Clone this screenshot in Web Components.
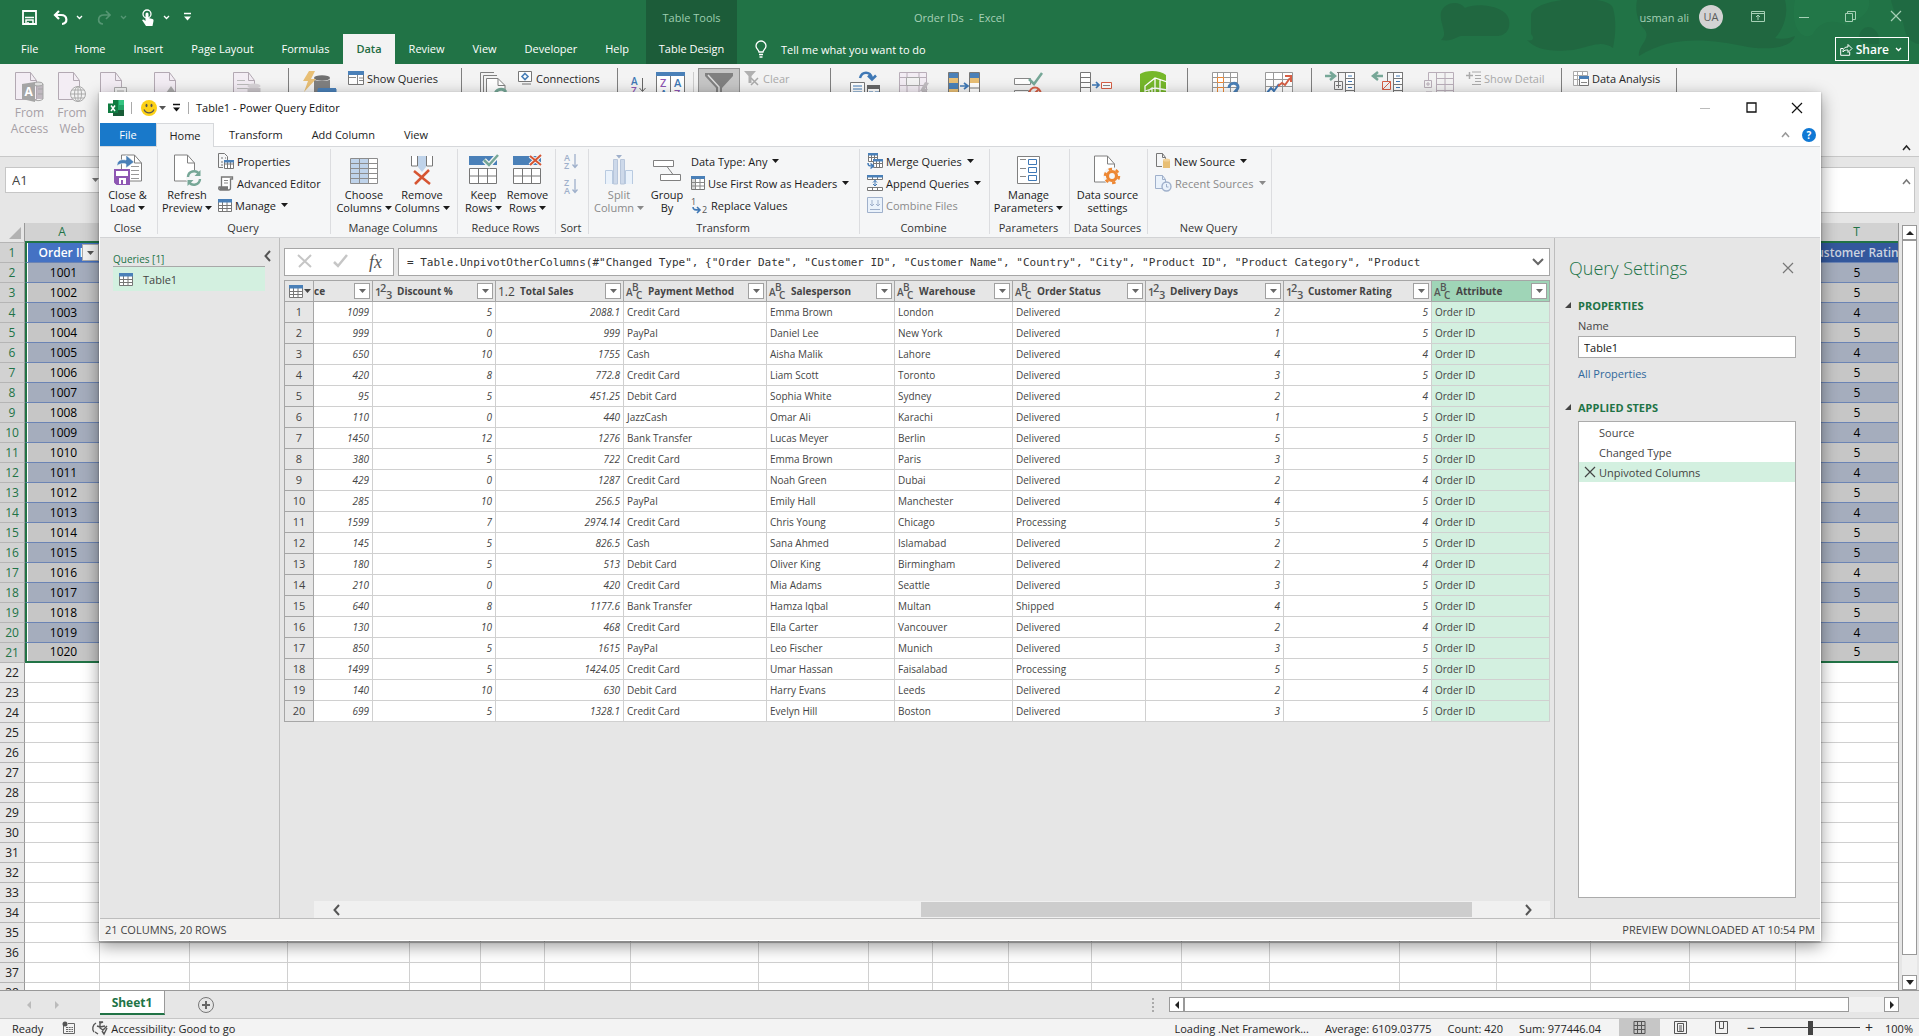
<!DOCTYPE html>
<html lang="en">
<head>
<meta charset="utf-8">
<title>Order IDs - Excel</title>
<style>
html, body {
  height: 100%;
  margin: 0;
}

body {
  position: relative;
  display: flex;
  flex-direction: column;
  overflow: hidden;
  background: #e6e6e6;
  color: #262626;
  font-family: "Open Sans", "Noto Sans", sans-serif;
  font-size: 11px;
}

xl-sheet {
  flex: 1;
  min-height: 0;
}

pq-window {
  position: absolute;
  inset: 92px 98px 95px 99px;
}
</style>
</head>
<body>
<xl-header></xl-header>
<xl-ribbon></xl-ribbon>
<xl-formula-bar></xl-formula-bar>
<xl-sheet></xl-sheet>
<xl-sheet-tabs></xl-sheet-tabs>
<xl-status-bar></xl-status-bar>
<pq-window></pq-window>

<script>
const page = (x, w, h) => `<path d="M${x} 1h${w - 8}l7 8v${h - 10}h-${w - 1}z" fill="#fff" stroke="#808080"/><path d="M${x + w - 8} 1v8h7" fill="none" stroke="#808080"/>`;
const greyPage = '<path d="M.5.5h15l6 8v19h-21z" fill="#f3edf4" stroke="#b3a9b3"/><path d="M15.500.5v8h6" fill="none" stroke="#b3a9b3"/>';

// name: [width, height, markup]
const icons = {
  caret: [7, 4, '<path d="M0 0h7L3.500 4z" fill="currentColor"/>'],
  chevron: [7, 5, '<path d="M1 1l2.500 2.500L6 1" fill="none" stroke="currentColor" stroke-width="1.300"/>'],
  up: [9, 6, '<path d="M1 5l3.500-4L8 5" fill="none" stroke="currentColor" stroke-width="1.500"/>'],
  customize: [7, 8, '<path d="M0 .5h7" stroke="currentColor" stroke-width="1.500"/><path d="M0 3.500h7L3.500 7.500z" fill="currentColor"/>'],
  save: [15, 15, '<path d="M1 1h13v13H1z" fill="none" stroke="#fff" stroke-width="1.800"/><path d="M3 7.500h9M4 14v-4h7v4M6 14v-2" stroke="#fff" stroke-width="1.500" fill="none"/>'],
  undo: [15, 15, '<path d="M6 1L2 5l4 4M2 5h6c7 0 7 9 1 9" fill="none" stroke="currentColor" stroke-width="2.200"/>'],
  redo: [15, 15, '<path d="M9 1l4 4-4 4M13 5H7C0 5 0 14 6 14" fill="none" stroke="currentColor" stroke-width="1.700"/>'],
  touch: [14, 17, '<circle cx="6" cy="5" r="4" fill="none" stroke="#fff" stroke-width="1.300"/><path d="M4.500 5a1.500 1.500 0 0 1 3 0v4l4 1q1.500.5 1 2l-1 5H5l-4-6 1.500-.5 2 1.500z" fill="#fff"/>'],
  bulb: [12, 17, '<path d="M4 11C4 9 1 8 1 5a5 5 0 0 1 10 0c0 3-3 4-3 6zM4 13.500h4M4.500 16h3" fill="none" stroke="#fff" stroke-width="1.300"/>'],
  ribbonOptions: [14, 11, '<path d="M.5.5h13v10H.5zM.5 2.500h13M7 9V4.500M5 6l2-2 2 2" fill="none" stroke="currentColor"/>'],
  minimize: [10, 10, '<path d="M0 5.500h10" stroke="currentColor"/>'],
  restore: [11, 11, '<path d="M.5 2.500h7v8h-7zM2.500 2V.5h8v8H8" fill="none" stroke="currentColor"/>'],
  maximize: [11, 11, '<path d="M1 1h9v9H1z" fill="none" stroke="currentColor" stroke-width="1.300"/>'],
  close: [12, 12, '<path d="M1 1l10 10M11 1L1 11" stroke="currentColor" stroke-width="1.200"/>'],
  share: [13, 13, '<path d="M3 5.500H.7v6.800h9V9M3 9c0-4 2-5 5-5V1.500l4 4-4 4V7c-2 0-4 0-5 2z" fill="none" stroke="#fff"/>'],
  access: [29, 31, greyPage + '<path d="M22 12h6v15h-6z" fill="#c0b8c0"/><ellipse cx="23" cy="12" rx="5" ry="2" fill="#ddd" stroke="#a5a5a5"/><path d="M28 12v15c-2 2-6 2-8 1M28 17h-5M28 22h-5" fill="none" stroke="#a5a5a5"/><path d="M7 12l13-2v20L7 27z" fill="#a5a5a5"/><text x="9.500" y="24" font-size="12" font-weight="700" fill="#fff">A</text>'],
  web: [28, 31, greyPage + '<circle cx="20" cy="22" r="7.500" fill="#f3f3f3" stroke="#aaa"/><path d="M12.500 22h15M20 14.500v15M14 18h12M14 26h12" stroke="#aaa"/><ellipse cx="20" cy="22" rx="3.500" ry="7.500" fill="none" stroke="#aaa"/>'],
  textFile: [28, 31, greyPage + '<path d="M14.500 15.500h12v14h-12z" fill="#f3f3f3" stroke="#aaa"/><path d="M17 19h7M17 22h7" stroke="#aaa"/>'],
  otherSource: [28, 31, greyPage + '<path d="M16 13l5 7H11z" transform="translate(1 1)" fill="#aaa"/>'],
  recent: [28, 31, greyPage + '<path d="M4 8.500h8M4 12.500h14M4 16.500h14M4 20.500h10" stroke="#bbb"/><ellipse cx="21" cy="14" rx="6.500" ry="2.500" fill="#d8d4d8"/><path d="M14.500 16h13v12h-13z" fill="#c9c4c9"/>'],
  getData: [34, 31, '<ellipse cx="19" cy="6" rx="8" ry="2.700" fill="#707070"/><path d="M11 7.500c3 2 13 2 16 0V24H11z" fill="#808080"/><path d="M6-1h6L8 7h5L1 20 5 9H0z" fill="#e8bf75"/><path d="M15 17h18v13H15z" fill="#fff" stroke="#4a80b8"/><path d="M15 16h18v4H15z" fill="#4a80b8"/>'],
  queries: [16, 14, '<path d="M.5.5h15v13H.5z" fill="#fff" stroke="#777"/><path d="M0 0h16v4H0z" fill="#4a80b8"/><path d="M9.500 4v9M1 6.500h7M11 7h4M11 9.500h4" stroke="#888"/>'],
  refreshAll: [28, 31, '<path d="M.5 25V.5H14M3.500 27V3.500H17" fill="none" stroke="#808080"/><path d="M6.500 6.500H18l7 7V30H6.500z" fill="#fff" stroke="#808080"/><path d="M18 6.500v7h7" fill="none" stroke="#808080"/><path d="M15 23a6 6 0 0 1 11-3" fill="none" stroke="#76a797" stroke-width="3"/>'],
  connections: [15, 14, '<path d="M.5.5h13v10H.5zM4 13h9" fill="#fff" stroke="#777"/><path d="M7 2.500L10 5.500l-3 3-3-3z" fill="none" stroke="#4a80b8" stroke-width="1.600"/>'],
  sortAZ: [14, 28, '<text x="0" y="13" font-size="10" font-weight="600" fill="#3f78b5">A</text><text x="0" y="23" font-size="10" font-weight="600" fill="#8e57b3">Z</text><path d="M11.500 6v13M8.500 16l3 3.500 3-3.500" fill="none" stroke="#666"/>'],
  sort: [29, 29, '<path d="M.5.5h28v28H.5z" fill="#fff" stroke="#777"/><path d="M0 0h29v4H0z" fill="#4a80b8"/><path d="M14.500 4v24" stroke="#777"/><g font-size="11" font-weight="600"><text x="4" y="15" fill="#8e57b3">Z</text><text x="18" y="15" fill="#3f78b5">A</text><text x="4" y="26" fill="#3f78b5">A</text><text x="18" y="26" fill="#8e57b3">Z</text></g>'],
  filter: [28, 29, '<path d="M0 0h28v3L17 15v13h-6V15L0 3z" fill="#808080"/><path d="M3 2l11 12v12" fill="none" stroke="#ddd" stroke-width="1.500"/>'],
  clear: [16, 15, '<path d="M0 0h12L7.500 5v7h-3V5z" fill="#b0b0b0"/><path d="M7 7l7 7M14 7l-7 7" stroke="#aaa" stroke-width="1.500"/>'],
  textToColumns: [30, 31, '<path d="M10 6C12-1 20-1 22 6M18 3.500l4 4 4-4" fill="none" stroke="#3f78b5" stroke-width="2.500"/><path d="M.5 10.500h14v20H.5z" fill="#fff" stroke="#777"/><path d="M3 14h9M3 17h9M3 20h9" stroke="#3f78b5"/><path d="M17.500 13.500h12v16h-12z" fill="#fff" stroke="#666"/><path d="M17 13h13v4H17z" fill="#666"/><path d="M19 20h4M25 20h4" stroke="#3f78b5"/>'],
  flashFill: [30, 31, '<path d="M.5.5h27v26H.5zM.5 5.500h27M.5 13.500h27M8 .5v26M20 .5v26" fill="#f3edf4" stroke="#b9aeb9"/><path d="M7.500 5.500h13v8h-13z" fill="#f3f3f3" stroke="#aaa"/><path d="M26 10l4 1-4 6h3l-9 12 3-10h-2z" fill="#c0bcc0"/>'],
  duplicates: [32, 31, '<path d="M.5.5h10v30H.5z" fill="#4a80b8" stroke="#777"/><path d="M1 6h9v5H1zM1 17h9v5H1z" fill="#e8bf75"/><path d="M21.500.5h10v30h-10z" fill="#fff" stroke="#777"/><path d="M22 1h9v5h-9z" fill="#4a80b8"/><path d="M22 6h9v5h-9z" fill="#e8bf75"/><path d="M21.500 16h10" stroke="#777"/><path d="M12 14h8M16 11l4 3-4 3" fill="none" stroke="#3f78b5" stroke-width="1.700"/>'],
  validation: [28, 31, '<path d="M.5 6.500h16v6H.5zM.5 18.500h14v6H.5z" fill="#fff" stroke="#888"/><path d="M15 7l5 5 8-11" fill="none" stroke="#76a797" stroke-width="2.500"/><circle cx="21" cy="21" r="5.500" fill="none" stroke="#d65f45" stroke-width="2"/><path d="M17 25l8-8" stroke="#d65f45" stroke-width="2"/>'],
  consolidate: [32, 31, '<path d="M.5.5h10v30H.5zM.5 5.500h10M.5 10.500h10M.5 15.500h10M.5 20.500h10" fill="#fff" stroke="#777"/><path d="M12 13h7M16 10l3 3-3 3" fill="none" stroke="#3f78b5" stroke-width="1.700"/><path d="M21.500 10.500h10v6h-10z" fill="#fff" stroke="#d65f45"/><path d="M23 13.500h7" stroke="#888"/>'],
  relations: [28, 31, '<path d="M0 2C6-2 20-2 26 3v24H0z" fill="#76b82a"/><path d="M5 30V14l10-8 12 4v20M15 6v24M5 19l10-3 12 2M20 8v22M9 26v-8l3-2v14" fill="none" stroke="#fff" stroke-width="1.300"/>'],
  whatIf: [28, 31, '<path d="M.5.5h25v26H.5zM.5 5.500h25M.5 10.500h25M.5 15.500h25M5.500.5v26M11.500.5v26M18.500.5v26" fill="#fff" stroke="#999"/><path d="M5.500 5.500h6v5h-6zM5.500 15.500h6v5h-6z" fill="#fff" stroke="#ed8733"/><path d="M17 16c0-6 9-6 9-1 0 4-4 3-4 8" fill="none" stroke="#4a80b8" stroke-width="3"/>'],
  forecast: [28, 31, '<path d="M.5.5h27v27H.5zM.5 7.500h27M.5 14.500h27M8.500.5v27M17.500.5v27" fill="#fff" stroke="#999"/><path d="M1 22l5-6 3 3 5-7" fill="none" stroke="#3f78b5" stroke-width="2"/><path d="M13 14l4-3 3 2 5-7M20 4h6v6" fill="none" stroke="#d65f45" stroke-width="2"/>'],
  group: [30, 31, '<path d="M0 4h8M5 0l5 4-5 4" fill="none" stroke="#76a797" stroke-width="2.500"/><path d="M12 .5h18M13.500 1v10M9.500 9.500h8v8h-8zM11 13.500h5M13.500 11v5" fill="none" stroke="#777"/><path d="M20.500 1v29h9V1M20 6.500h9M20 12.500h9M20 18.500h9M20 24.500h9" fill="#fff" stroke="#777"/><path d="M23 4h4M23 9.500h4M23 15.500h4M23 21.500h4" stroke="#3f78b5"/>'],
  ungroup: [30, 31, '<path d="M2 4h8M5 0L0 4l5 4" fill="none" stroke="#76a797" stroke-width="2.500"/><path d="M14 .5h16M14.500 1v8" fill="none" stroke="#777"/><path d="M9.500 9.500h8v8h-8zM17.500 9.500l-8 8" fill="none" stroke="#d65f45"/><path d="M20.500 1v29h9V1M20 6.500h9M20 12.500h9M20 18.500h9M20 24.500h9" fill="#fff" stroke="#777"/><path d="M23 4h4M23 9.500h4M23 15.500h4M23 21.500h4" stroke="#3f78b5"/>'],
  subtotal: [30, 31, '<path d="M4.500 8V.5H29.500v30h-17V.5M12.500 6.500h17M12.500 12.500h17M12.500 18.500h17M21 .5v30M.5 8.500h7v7h-7zM2 12h4M4 10v4M2 30V20h6v10" fill="none" stroke="#b9aeb9"/>'],
  detail: [15, 15, '<path d="M0 4.500h7M3.500 1v7" stroke="#aaa" stroke-width="1.500"/><path d="M6 1h9M9 4.500h6M9 7.500h6M9 10.500h6M6 13.500h9" stroke="#aaa"/>'],
  analysis: [16, 15, '<path d="M.5.5h14v14H.5zM.5 4.500h14M.5 8.500h14M4.500.5v14M9.500.5v14" fill="#fff" stroke="#aaa"/><path d="M6.500 5.500h9v9h-9z" fill="#fff" stroke="#777"/><path d="M6 5h10v3H6z" fill="#4a80b8"/><path d="M8 11.500h6" stroke="#888"/>'],

  excel: [16, 16, '<path d="M5 0h11v16H5z" fill="#21a366"/><path d="M5 0h5v5H5z" fill="#107c41"/><path d="M11 0h5v5h-5z" fill="#33c481"/><path d="M5 5h5v5H5zM11 10h5v6H5v-6z" fill="#185c37"/><path d="M0 3.500h10v9.500H0z" fill="#107c41"/><path d="M3 5.500l4 5.500M7 5.500L3 11" stroke="#fff" stroke-width="1.500"/>'],
  smile: [16, 16, '<circle cx="8" cy="8" r="8" fill="#fcd116"/><ellipse cx="5.500" cy="5.500" rx="1" ry="1.800" fill="#555"/><ellipse cx="10.500" cy="5.500" rx="1" ry="1.800" fill="#555"/><path d="M3 9.500c2 4.500 8 4.500 10 0" fill="none" stroke="#555" stroke-width="1.200"/>'],
  help: [14, 14, '<circle cx="7" cy="7" r="7" fill="#0f78d4"/><text x="4.500" y="11" font-size="10" font-weight="700" fill="#fff">?</text>'],
  closeLoad: [28, 31, page(7.5, 21, 28) + '<path d="M17 12.500h8M17 16.500h8M17 20.500h8M17 24.500h8" stroke="#999"/><path d="M3 12C3 6 7 5 12 6V1l8 7-8 6v-4c-4-1-7 0-9 2z" fill="#4a80b8" stroke="#f5f6f7" stroke-width=".600"/><path d="M1 16h14v14H3l-2-2z" fill="#fff" stroke="#8e57b3" stroke-width="2"/><path d="M1 22h14v8H1z" fill="#8e57b3"/><path d="M5 24h7v6H5z" fill="#fff"/><path d="M7 26h2v4H7z" fill="#8e57b3"/>'],
  refresh: [28, 31, page(1.5, 21, 28) + '<circle cx="21" cy="24" r="8" fill="#f5f6f7"/><path d="M15 23a6 6 0 0 1 11-3M27 25a6 6 0 0 1-11 3" fill="none" stroke="#76a797" stroke-width="2.400"/><path d="M27.500 16v6h-6zM14.500 32v-6h6z" fill="#76a797"/>'],
  properties: [16, 16, '<path d="M.5.5h6l3 3v4M.5.5v14H5" fill="none" stroke="#777"/><path d="M3 5h2M3 9h2M3 12h2M7 5h1" stroke="#777"/><path d="M6.500 7.500h9v8h-9zM6.500 11h9M9.500 8v8M12.500 8v8" fill="#fff" stroke="#777"/><path d="M6 7h10v2.500H6z" fill="#4a80b8"/>'],
  editor: [16, 15, '<path d="M3.500 11V1h11v2h-2v9q0 2-2 2H2q-2-1-1-3h9" fill="#fff" stroke="#777" stroke-width="1.300"/><path d="M6 4.500h4M6 7h4" stroke="#888"/><path d="M1 11h9v3H2z" fill="#777"/>'],
  table: [14, 13, '<path d="M.5.5h13v12H.5zM.5 6.500h13M.5 9.500h13M4.500 3v9M9 3v9" fill="#fff" stroke="#777"/><path d="M0 0h14v3.500H0z" fill="#4a80b8"/>'],
  chooseColumns: [28, 28, '<path d="M.5 1.500h27v25H.5z" fill="#fff"/><path d="M1 2h18v24H1z" fill="#bfd3ea"/><path d="M.5 1.500h27v25H.5zM.5 6.500h27M.5 11.500h27M.5 16.500h27M.5 21.500h27M9.500 1.500v25M18.500 1.500v25" fill="none" stroke="#8c8c8c"/>'],
  removeColumns: [24, 31, '<path d="M1.500 2v10h6V2M22.500 2v10h-6V2" fill="#fff" stroke="#777"/><path d="M8 2h8v11l-4 5-4-5z" fill="#bfd3ea"/><path d="M4 17l16 13M19 16L5 30" stroke="#d65532" stroke-width="2.500"/>'],
  keepRows: [30, 30, '<path d="M0 1h28v9H0z" fill="#4a80b8"/><path d="M.5 13.500h27v15H.5zM.5 21h27M9.500 13v15M18.500 13v15" fill="#fff" stroke="#777"/><path d="M15 5l5 5 9-10" fill="none" stroke="#f5f6f7" stroke-width="5"/><path d="M15 5l5 5 9-10" fill="none" stroke="#76a797" stroke-width="2.500"/>'],
  removeRows: [30, 30, '<path d="M0 1h28v9H0z" fill="#4a80b8"/><path d="M.5 13.500h27v15H.5zM.5 21h27M9.500 13v15M18.500 13v15" fill="#fff" stroke="#777"/><path d="M17 1l11 9M28 0L17 10" stroke="#f5f6f7" stroke-width="4"/><path d="M17 1l11 9M28 0L17 10" stroke="#d65532" stroke-width="2"/>'],
  ascending: [14, 17, '<text x="0" y="8" font-size="9" font-weight="600" fill="#9fb0cb">A</text><text x="0" y="16" font-size="9" font-weight="600" fill="#9fb0cb">Z</text><path d="M11 1v13M8.500 11.500L11 14.500l2.500-3" fill="none" stroke="#9fb0cb" stroke-width="1.300"/>'],
  descending: [14, 17, '<text x="0" y="8" font-size="9" font-weight="600" fill="#9fb0cb">Z</text><text x="0" y="16" font-size="9" font-weight="600" fill="#9fb0cb">A</text><path d="M11 1v13M8.500 11.500L11 14.500l2.500-3" fill="none" stroke="#9fb0cb" stroke-width="1.300"/>'],
  split: [28, 30, '<path d="M.5 29V15.500h7V29M27.500 29V15.500h-7V29" fill="#eaf2fb" stroke="#b8cae0"/><path d="M8.500 4.500h4V29h-4zM15.500 4.500h4V29h-4z" fill="#cdd9ea" stroke="#b8c6db"/><path d="M11 0h6l-3 3.500z" fill="#9fb0cb"/>'],
  groupBy: [30, 30, '<path d="M1.500 5.500h20v6h-20zM8.500 19.500h20v6h-20z" fill="#fff" stroke="#808080"/><path d="M15 11.500l6 8" stroke="#808080"/>'],
  firstRow: [14, 14, '<path d="M.5.5h13v13H.5z" fill="#fff" stroke="#777"/><path d="M1 3h3v10H1z" fill="#d8d8d8"/><path d="M0 0h14v3H0z" fill="#4a80b8"/><path d="M.5 6.500h13M.5 10h13M4.500 3v10M9 3v10" stroke="#888"/>'],
  replace: [17, 17, '<text x="0" y="8" font-size="9" fill="#555">1</text><text x="11" y="16" font-size="9" fill="#555">2</text><path d="M2 10c0 3 2 3 7 3M6 10l3 3-3 3" fill="none" stroke="#3f78b5" stroke-width="1.600"/>'],
  merge: [16, 16, '<path d="M1.500.5h9v8h-9zM1.500 4.500h9M4.500 1v8M7.500 1v8" fill="#fff" stroke="#777"/><path d="M1 0h10v2.500H1z" fill="#4a80b8"/><path d="M6.500 6.500h9v8h-9zM6.500 10.500h9M9.500 7v8M12.500 7v8" fill="#fff" stroke="#777"/><path d="M6 6h10v2.500H6z" fill="#4a80b8"/><path d="M1 10c0 3 1 3 5 3M3.500 10.500l3 2.500-3 2.500" fill="none" stroke="#3f78b5" stroke-width="1.500"/>'],
  append: [16, 16, '<path d="M.5 1.500h15v3H.5zM.5 12.500h15v3H.5zM5.500 12.500v3M10.500 12.500v3M5.500 2v3M10.500 2v3" fill="#fff" stroke="#777"/><path d="M0 0h16v2.500H0z" fill="#4a80b8"/><path d="M8 5v6M6 7.500L8 5.500l2 2M6 9l2 2 2-2" fill="none" stroke="#3f78b5"/>'],
  combine: [16, 16, '<path d="M.5.5h15v15H.5z" fill="#eaf2fb" stroke="#9fb0cb"/><path d="M5 3v6M3 7l2 2 2-2M11 3v6M9 7l2 2 2-2M3 12.500h10" fill="none" stroke="#9fb0cb"/>'],
  parameters: [24, 29, '<path d="M.5.5h22v27H.5z" fill="#fff" stroke="#808080"/><path d="M3 3.500h6M3 12.500h6M3 20.500h6" stroke="#888"/><path d="M11.500 3.500h8v5h-8zM11.500 11.500h8v5h-8zM11.500 19.500h8v5h-8z" fill="#fff" stroke="#3f78b5"/>'],
  dataSource: [27, 30, page(.5, 21, 28) + '<circle cx="18" cy="21" r="9" fill="#f5f6f7"/><circle cx="18" cy="21" r="4.500" fill="none" stroke="#ed8733" stroke-width="3.200"/><circle cx="18" cy="21" r="7" fill="none" stroke="#ed8733" stroke-width="2.500" stroke-dasharray="3.500 3.830"/>'],
  newSource: [16, 16, '<path d="M1.500.5h6l3 4V6M1.500.5v13H7M7.500.5v4h3" fill="none" stroke="#777"/><path d="M8 7h7v8H8z" fill="#e8bf75"/><ellipse cx="11.500" cy="7" rx="3.500" ry="1.500" fill="#f1d29a"/>'],
  recentSource: [17, 17, '<path d="M.5.5h7l3 4v9H.5z" fill="#eaf2fb" stroke="#9fb0cb"/><path d="M7.500.5v4h3" fill="none" stroke="#9fb0cb"/><circle cx="11.500" cy="11.500" r="4.500" fill="#eaf2fb" stroke="#9fb0cb" stroke-width="1.400"/><path d="M11.500 9v3h2" fill="none" stroke="#9fb0cb"/>'],
  cross: [16, 14, '<path d="M1 1l13 12M14 1L2 13" stroke="currentColor" stroke-width="2"/>'],
  check: [16, 14, '<path d="M1 8l4 4L14 1" fill="none" stroke="currentColor" stroke-width="2.500"/>'],
  left: [7, 12, '<path d="M6 1L1.500 6 6 11" fill="none" stroke="currentColor" stroke-width="2"/>'],
  right: [7, 12, '<path d="M1 1l4.500 5L1 11" fill="none" stroke="currentColor" stroke-width="2"/>'],
  down: [12, 8, '<path d="M1 1l5 5 5-5" fill="none" stroke="currentColor" stroke-width="2"/>'],
  corner: [6, 6, '<path d="M6 0v6H0z" fill="#444"/>'],
  selectAll: [12, 12, '<path d="M12 0v12H0z" fill="#b2b2b2"/>'],
  whole: [17, 17, '<g font-size="11" font-weight="600" fill="#555"><text x="0" y="13">1</text><text x="5" y="9">2</text><text x="11" y="16">3</text></g>'],
  decimal: [17, 17, '<text x="0" y="13" font-size="12" font-weight="400" fill="#444">1.2</text>'],
  any: [17, 17, '<g font-size="10" font-weight="600" fill="#555"><text x="0" y="13">A</text><text x="6" y="8">B</text><text x="10" y="16">C</text></g>'],
  macro: [13, 13, '<path d="M1.500 4v8.500h11v-10H6" fill="none" stroke="#666"/><path d="M4 6.500h7M4 8.500h7M4 10.500h7" stroke="#666" stroke-dasharray="2 .700"/><circle cx="3" cy="3" r="2.500" fill="#555"/>'],
  accessible: [16, 14, '<path d="M4 2a6 6 0 0 0-2 9M3 11l3 2M7 1h4l-3 1v5l3 2 4-4M5 5l3 1 5-1M10 10l2 3 3-6" fill="none" stroke="#555" stroke-width="1.400"/>'],
  viewGrid: [13, 13, '<path d="M1 .5h11v12H1zM1 4.500h11M1 8.500h11M4.500 0v13M8.500 0v13" fill="none" stroke="#555"/>'],
  viewPage: [13, 13, '<path d="M.5.5h12v12H.5zM3.500 2.500h6v8h-6zM5 5h3M5 7h3M5 9h3" fill="none" stroke="#555"/>'],
  viewBreak: [13, 13, '<path d="M.5.5h12v12H.5zM4.500 0v7.500h4V0" fill="none" stroke="#555"/>'],
  plus: [16, 16, '<circle cx="8" cy="8" r="7.500" fill="none" stroke="#777"/><path d="M8 4v8M4 8h8" stroke="#666" stroke-width="2"/>'],
  triLeft: [4, 8, '<path d="M4 0v8L0 4z" fill="currentColor"/>'],
  triRight: [4, 8, '<path d="M0 0v8l4-4z" fill="currentColor"/>'],
  triUp: [8, 4, '<path d="M0 4h8L4 0z" fill="currentColor"/>'],
  triDown: [8, 5, '<path d="M0 0h8L4 5z" fill="currentColor"/>']
};

const baseStyle = `
:host { display: block; box-sizing: border-box; }
* { box-sizing: border-box; }
button, input { font: inherit; color: inherit; margin: 0; border-radius: 0; }
button { background: none; border: 0; padding: 0; }
ul { list-style: none; margin: 0; padding: 0; }
`;

function define(name, html) {
  const template = document.createElement('template');
  template.innerHTML = html;
  customElements.define(name, class extends HTMLElement {
    constructor() {
      super();
      this.attachShadow({mode: 'open'});
      this.shadowRoot.appendChild(template.content.cloneNode(true));
    }
  });
}

class XlIcon extends HTMLElement {
  constructor() {
    super();
    this.attachShadow({mode: 'open'});
  }

  connectedCallback() {
    const [w, h, body] = icons[this.getAttribute('name')];
    this.shadowRoot.innerHTML = `<style>:host{display:inline-block;flex:none;line-height:0}svg{display:block;overflow:visible}</style>
      <svg width="${w}" height="${h}" viewBox="0 0 ${w} ${h}" aria-hidden="true">${body}</svg>`;
  }
}
customElements.define('xl-icon', XlIcon);

const icon = name => `<xl-icon name="${name}"></xl-icon>`;

define('xl-header', `
<style>${baseStyle}
:host { flex: none; background: #217346; color: #fff; }
.bar { display: flex; height: 64px; position: relative; }
.art { position: absolute; right: 0; top: 0; }
.row { display: flex; align-items: center; height: 34px; }
.row.tabs, .row.tell { height: 30px; }
.quick { padding: 0 22px; gap: 8px; }
.quick button { display: flex; align-items: center; gap: 8px; margin-right: 6px; }
.quick button:first-child { margin-right: 8px; }
.faded { color: #559673; }
.tabs button { height: 30px; padding: 0 14px 1px; font-size: 11px; }
.tabs button:first-child { padding: 0 22px 1px 21px; }
.tabs button.on { background: #f3f3f3; color: #1e6b41; padding: 0 13px 1px; font-weight: 600; }
.context { background: #1c5c39; width: 91px; margin-left: 3px; }
.context .row { justify-content: center; color: #9dceb0; }
.context .tabs { color: #fff; }
.context .tabs button:first-child { padding: 0 0 1px; }
.rest { flex: 1; position: relative; }
.title { padding-left: 177px; font-size: 11px; color: #a6d0b6; white-space: pre; }
.user { margin-left: auto; display: flex; align-items: center; gap: 10px; color: #a6d0b6; height: 34px; }
.user i { width: 24px; height: 24px; border-radius: 12px; background: #d3d3d3; color: #5b5b5b; font-style: normal; text-align: center; line-height: 24px; }
.win { display: flex; margin-left: 12px; height: 30px; color: #a6d0b6; }
.win button { width: 46px; }
.tell { padding-left: 18px; gap: 14px; }
.share { margin-left: auto; margin-right: 10px; border: 1px solid #fff; height: 24px; display: flex; align-items: center; gap: 3px; padding: 0 6px 0 4px; font-size: 12px; font-weight: 600; }
.share xl-icon:last-child { margin-left: 3px; }
</style>
<div class="bar">
  <svg class="art" width="480" height="64" aria-hidden="true">
    <g fill="#206740">
      <path d="M2 12C6 2 20 0 26 8c12-6 42-2 44 12 2 12-6 16-12 16H22c-4 0-8 6-20 4 8-6-2-16 0-28z"/>
      <path d="M92 14C98-4 170-6 174 8c4 14 2 30 0 40-12-8-20-2-40 2-24 2-36 0-46-10 6 2 8-2 4-6z"/>
      <path d="M198 0h148c4 14-2 30-10 38 10 2 14 0 20-2-4 14-34 14-52 10-30-6-70-12-104 10-2-10 12-16 6-26-8-8-10-20-8-30z"/>
      <path d="M420 36c4-14 18-10 20 2v6c-10 0-18 0-20-8zM452 0h28v44c-12-2-14-12-16-22-6-4-10-12-12-22z" opacity=".7"/>
    </g>
    <g fill="#237a49" opacity=".6"><path d="M356 0c-6 30 10 42 18 34 6-12 20-16 34-8 14-8 24-14 22-26z"/></g>
  </svg>
  <div>
    <div class="row quick">
      <button aria-label="Save">${icon('save')}</button>
      <button aria-label="Undo">${icon('undo')}${icon('chevron')}</button>
      <button class="faded" aria-label="Redo">${icon('redo')}${icon('chevron')}</button>
      <button aria-label="Touch mode">${icon('touch')}${icon('chevron')}</button>
      <button aria-label="Customize">${icon('customize')}</button>
    </div>
    <div class="row tabs">
      <button>File</button><button>Home</button><button>Insert</button><button>Page Layout</button><button>Formulas</button><button class="on">Data</button><button>Review</button><button>View</button><button>Developer</button><button>Help</button>
    </div>
  </div>
  <div class="context">
    <div class="row">Table Tools</div>
    <div class="row tabs"><button>Table Design</button></div>
  </div>
  <div class="rest">
    <div class="row">
      <span class="title">Order IDs  -  Excel</span>
      <span class="user">usman ali <i>UA</i></span>
      <span class="win">
        <button aria-label="Ribbon display options">${icon('ribbonOptions')}</button><button aria-label="Minimize">${icon('minimize')}</button><button aria-label="Restore">${icon('restore')}</button><button aria-label="Close">${icon('close')}</button>
      </span>
    </div>
    <div class="row tell">${icon('bulb')}<span>Tell me what you want to do</span>
      <button class="share">${icon('share')}Share${icon('chevron')}</button>
    </div>
  </div>
</div>`);

define('xl-group', `
<style>${baseStyle}
:host { display: flex; flex: none; width: var(--w); height: 80px; margin-top: 4px; padding-top: 4px; border-right: 1px solid #7f7f7f; align-items: flex-start; }
</style><slot></slot>`);

define('xl-big', `
<style>${baseStyle}
:host { flex: none; width: var(--w); }
button { display: flex; flex-direction: column; align-items: center; gap: 2px; width: 100%; font-size: 12px; line-height: 16px; color: #a6a0a6; }
</style><button><slot name="icon"></slot><div><slot></slot></div></button>`);

define('xl-small', `
<style>${baseStyle}
:host { flex: none; margin-top: -2px; }
:host([off]) { color: #aaa; }
button { display: flex; align-items: center; gap: 3px; height: 16px; }
</style><button><slot name="icon"></slot><slot></slot></button>`);

const big = (name, w, label = '') => `<xl-big style="--w:${w}px"><xl-icon slot="icon" name="${name}"></xl-icon>${label}</xl-big>`;

define('xl-ribbon', `
<style>${baseStyle}
:host { flex: none; position: relative; height: 93px; background: #f3f3f3; border-bottom: 1px solid #c8c8c8; }
.groups { display: flex; }
.line { width: 1px; height: 70px; background: #ccc; margin: 0 1px 0 3px; }
.filter { display: flex; justify-content: center; align-items: flex-start; width: 42px; height: 70px; margin: -4px 4px 0 3px; padding-top: 4px; border: 1px solid #929292; background: #c6c6c6; flex: none; }
.up { position: absolute; right: 8px; bottom: 2px; }
</style>
<div class="groups">
  <xl-group style="--w:289px; padding-left:8px">${big('access', 43, 'From<br>Access')}${big('web', 42, 'From<br>Web')}${big('textFile', 42)}${big('otherSource', 66)}<i class="line"></i>${big('recent', 84)}</xl-group>
  <xl-group style="--w:173px; padding-left:2px">${big('getData', 57)}<xl-small><xl-icon slot="icon" name="queries"></xl-icon>Show Queries</xl-small></xl-group>
  <xl-group style="--w:156px; padding-left:8px">${big('refreshAll', 48)}<xl-small><xl-icon slot="icon" name="connections"></xl-icon>Connections</xl-small></xl-group>
  <xl-group style="--w:213px; padding-left:8px">${big('sortAZ', 24)}${big('sort', 40)}<i class="line"></i><button class="filter" aria-label="Filter">${icon('filter')}</button><xl-small off><xl-icon slot="icon" name="clear"></xl-icon>Clear</xl-small></xl-group>
  <xl-group style="--w:357px; padding-left:10px">${big('textToColumns', 48)}${big('flashFill', 50)}${big('duplicates', 50)}${big('validation', 78)}${big('consolidate', 58)}${big('relations', 58)}</xl-group>
  <xl-group style="--w:124px; padding-left:12px">${big('whatIf', 52)}${big('forecast', 54)}</xl-group>
  <xl-group style="--w:250px; padding-left:4px">${big('group', 48)}${big('ungroup', 48)}${big('subtotal', 54)}<xl-small off><xl-icon slot="icon" name="detail"></xl-icon>Show Detail</xl-small></xl-group>
  <xl-group style="--w:115px; padding-left:11px"><xl-small><xl-icon slot="icon" name="analysis"></xl-icon>Data Analysis</xl-small></xl-group>
</div>
<button class="up" aria-label="Collapse the ribbon">${icon('up')}</button>`);

define('xl-formula-bar', `
<style>${baseStyle}
:host { flex: none; height: 66px; padding: 10px 4px 0 5px; }
div { display: flex; align-items: flex-start; gap: 12px; }
.name { display: flex; align-items: center; width: 106px; height: 26px; border: 1px solid #c6c6c6; background: #fff; padding: 0 8px 0 6px; }
.name input { border: 0; width: 80px; padding: 0; font-size: 13px; color: #444; background: none; }
.name xl-icon { color: #777; }
.formula { flex: 1; display: flex; height: 46px; border: 1px solid #c6c6c6; background: #fff; }
.formula input { flex: 1; border: 0; background: none; }
.formula button { align-self: flex-start; padding: 5px 3px; color: #777; }
</style>
<div>
  <span class="name"><input aria-label="Name box" value="A1">${icon('caret')}</span>
  <span class="formula"><input aria-label="Formula bar"><button aria-label="Collapse formula bar">${icon('up')}</button></span>
</div>`);

const ratings = [5, 5, 4, 5, 4, 5, 5, 5, 4, 5, 4, 5, 4, 5, 5, 4, 5, 5, 4, 5];
const sheetWidths = [75, 90, 98, 122, 71, 64, 86, 128, 110, 64, 76, 83, 90, 88, 130, 97, 94, 99, 106, 122];

function sheetRow(n) {
  const cells = sheetWidths.map((w, i) => {
    if (n === 1 && i === 0) return '<td>Order ID<button aria-label="Filter Order ID">' + icon('caret') + '</button></td>';
    if (n === 1 && i === 19) return '<td>Customer Rating</td>';
    if (n > 1 && n < 22 && i === 0) return `<td>${999 + n}</td>`;
    if (n > 1 && n < 22 && i === 19) return `<td>${ratings[n - 2]}</td>`;
    return '<td></td>';
  }).join('');
  return `<tr class="${n < 22 ? 'sel' : ''}${n === 1 ? ' head' : ''}"><th scope="row">${n}</th>${cells}</tr>`;
}

define('xl-sheet', `
<style>${baseStyle}
:host { display: flex; background: #e6e6e6; border-bottom: 1px solid #999; }
.grid { flex: 1; overflow: hidden; border-right: 1px solid #999; }
table { table-layout: fixed; border-collapse: separate; border-spacing: 0; width: 1918px; font-size: 12px; color: #000; }
td, th { height: 20px; padding: 1px 0 0; line-height: 18px; font-weight: 400; text-align: center; white-space: nowrap; border: 0 solid #d0d0d0; border-width: 0 1px 1px 0; }
td { background: #fff; }
th { background: #e6e6e6; border-color: #b5b5b5; }
tbody th { border-right-color: #999; color: #222; }
thead th { padding: 0; background: #d2d2d2; color: #217346; border-bottom: 2px solid #217346; border-right-color: #bbb; }
thead th:first-child { background: #e6e6e6; border-bottom: 1px solid #b5b5b5; border-right-color: #999; line-height: 0; text-align: right; vertical-align: bottom; padding: 0 3px 3px 0; }
.sel th { background: #d2d2d2; color: #217346; }
.sel td { background: #c6c6c6; border-color: #6b84b4; border-right: 0; }
.sel:nth-child(even) td { background: #a5adbd; }
.sel td:nth-child(2) { border-left: 2px solid #217346; box-shadow: inset 1px 0 #fff; }
.sel:nth-child(21) td { border-bottom: 2px solid #217346; padding: 0; }
.head td { background: #33589d; color: #ccd3e0; font-weight: 600; position: relative; }
.head td:nth-child(2) { background: #4472c4; color: #fff; }
.head button { position: absolute; right: 1px; top: 1px; width: 17px; height: 17px; border: 1px solid #aaa; background: #f3f3f3; color: #555; display: flex; align-items: center; justify-content: center; }
.scroll { width: 20px; padding: 2px 2px 0 3px; display: flex; flex-direction: column; }
.scroll button { height: 15px; border: 1px solid #999; background: #fff; line-height: 0; display: flex; align-items: center; justify-content: center; color: #222; }
.scroll div { flex: 1; background: #f0f0f0; padding-bottom: 20px; display: flex; }
.scroll div i { flex: 1; background: #fff; border: 1px solid #999; }
</style>
<div class="grid">
  <table>
    <colgroup><col style="width:25px">${sheetWidths.map(w => `<col style="width:${w}px">`).join('')}</colgroup>
    <thead><tr><th>${icon('selectAll')}</th>${[...'ABCDEFGHIJKLMNOPQRST'].map(c => `<th scope="col">${c}</th>`).join('')}</tr></thead>
    <tbody>${Array.from({length: 38}, (_, i) => sheetRow(i + 1)).join('')}</tbody>
  </table>
</div>
<div class="scroll"><button aria-label="Scroll up">${icon('triUp')}</button><div><i></i></div><button aria-label="Scroll down">${icon('triDown')}</button></div>`);

define('xl-sheet-tabs', `
<style>${baseStyle}
:host { flex: none; display: flex; align-items: center; height: 27px; padding-right: 20px; background: #e6e6e6; }
.nav { display: flex; justify-content: space-between; width: 100px; padding: 0 41px 0 27px; color: #bbb; }
.tab { align-self: flex-start; width: 65px; height: 24px; background: #fff; border-right: 1px solid #999; border-bottom: 2px solid #217346; color: #217346; font-size: 12px; font-weight: 700; }
.add { margin-left: 33px; line-height: 0; }
.dots { margin-left: auto; height: 14px; border-left: 2px dotted #aaa; margin-right: 15px; }
.scroll { display: flex; width: 730px; height: 15px; background: #f0f0f0; }
.scroll button { width: 15px; border: 1px solid #999; background: #fff; display: flex; align-items: center; justify-content: center; color: #222; }
.scroll div { flex: 1; padding-right: 35px; display: flex; }
.scroll i { flex: 1; background: #fff; border: 1px solid #999; }
</style>
<span class="nav">${icon('triLeft')}${icon('triRight')}</span>
<button class="tab">Sheet1</button>
<button class="add" aria-label="New sheet">${icon('plus')}</button>
<i class="dots"></i>
<div class="scroll"><button aria-label="Scroll left">${icon('triLeft')}</button><div><i></i></div><button aria-label="Scroll right">${icon('triRight')}</button></div>`);

define('xl-status-bar', `
<style>${baseStyle}
:host { flex: none; display: flex; align-items: center; height: 18px; padding: 0 6px 0 12px; background: #f3f3f3; border-top: 1px solid #c6c6c6; white-space: nowrap; line-height: 16px; }
span { padding-top: 2px; }
.macro { margin: 0 17px 0 19px; }
.access { margin-right: 3px; }
.stats { margin-left: auto; display: flex; gap: 16px; margin-right: 18px; }
.view { width: 41px; height: 17px; line-height: 0; display: flex; align-items: center; justify-content: center; }
.view.on { background: #c6c6c6; }
.zoom { font-size: 14px; width: 18px; }
input { appearance: none; width: 100px; height: 16px; background: linear-gradient(#444, #444) center / 100% 1px no-repeat; }
input::-webkit-slider-thumb { appearance: none; width: 5px; height: 14px; background: #444; }
</style>
<span>Ready</span><xl-icon class="macro" name="macro"></xl-icon><xl-icon class="access" name="accessible"></xl-icon><span>Accessibility: Good to go</span>
<div class="stats"><span>Loading .Net Framework...</span><span>Average: 6109.03775</span><span>Count: 420</span><span>Sum: 977446.04</span></div>
<button class="view on" aria-label="Normal">${icon('viewGrid')}</button><button class="view" aria-label="Page layout">${icon('viewPage')}</button><button class="view" aria-label="Page break preview">${icon('viewBreak')}</button>
<button class="zoom" aria-label="Zoom out">−</button><input type="range" min="10" max="190" value="100" aria-label="Zoom"><button class="zoom" aria-label="Zoom in">+</button><span style="margin-left:7px">100%</span>`);

// Power Query window

define('pq-group', `
<style>${baseStyle}
:host { display: flex; flex-direction: column; flex: none; width: var(--w); padding-top: 2px; background: linear-gradient(#dcdde0, #dcdde0) right 2px / 1px calc(100% - 5px) no-repeat; }
div { flex: 1; display: flex; justify-content: center; padding: 1px 3px 0 0; }
:host([start]) div { justify-content: flex-start; }
footer { height: 18px; line-height: 17px; padding-right: 3px; text-align: center; color: #333; white-space: nowrap; }
</style><div><slot></slot></div><footer><slot name="label"></slot></footer>`);

define('pq-big', `
<style>${baseStyle}
:host { flex: none; width: var(--w); }
:host([off]) { color: #8a8a8a; }
button { display: flex; flex-direction: column; align-items: center; width: 100%; padding-top: 4px; line-height: 13px; white-space: nowrap; }
span { display: flex; align-items: flex-end; height: 31px; margin-bottom: 3px; }
</style><button><span><slot name="icon"></slot></span><div><slot></slot></div></button>`);

define('pq-small', `
<style>${baseStyle}
:host([off]) { color: #8a8a8a; }
button { display: flex; align-items: center; gap: 3px; height: 22px; white-space: nowrap; }
::slotted(xl-icon[name="caret"]) { margin-left: 2px; }
</style><button><slot name="icon"></slot><slot></slot></button>`);

const pqBig = (name, w, a, b, caret = true, off = '') => `<pq-big ${off} style="--w:${w}px"><xl-icon slot="icon" name="${name}"></xl-icon>${a}<br>${b}${caret ? ' ' + icon('caret').replace('>', ' style="vertical-align:2px">') : ''}</pq-big>`;
const pqSmall = (name, text, caret = true, off = '') => `<pq-small ${off}>${name ? `<xl-icon slot="icon" name="${name}"></xl-icon>` : ''}${text}${caret ? icon('caret') : ''}</pq-small>`;

define('pq-ribbon', `
<style>${baseStyle}
:host { flex: none; display: flex; height: 91px; background: #f5f6f7; border-bottom: 1px solid #d2d3d5; color: #1b1b1b; }
.col { padding-left: 2px; }
.sort { display: flex; flex-direction: column; gap: 5px; padding-top: 3px; }
</style>
<pq-group style="--w:58px">${pqBig('closeLoad', 56, 'Close &amp;', 'Load')}<span slot="label">Close</span></pq-group>
<pq-group start style="--w:173px">${pqBig('refresh', 58, 'Refresh', 'Preview')}<div class="col">${pqSmall('properties', 'Properties', false)}${pqSmall('editor', 'Advanced Editor', false)}${pqSmall('table', 'Manage')}</div><span slot="label">Query</span></pq-group>
<pq-group style="--w:127px">${pqBig('chooseColumns', 58, 'Choose', 'Columns')}${pqBig('removeColumns', 58, 'Remove', 'Columns')}<span slot="label">Manage Columns</span></pq-group>
<pq-group style="--w:98px">${pqBig('keepRows', 44, 'Keep', 'Rows')}${pqBig('removeRows', 44, 'Remove', 'Rows')}<span slot="label">Reduce Rows</span></pq-group>
<pq-group style="--w:33px"><div class="sort"><button aria-label="Sort ascending">${icon('ascending')}</button><button aria-label="Sort descending">${icon('descending')}</button></div><span slot="label">Sort</span></pq-group>
<pq-group start style="--w:271px">${pqBig('split', 60, 'Split', 'Column', true, 'off')}${pqBig('groupBy', 36, 'Group', 'By', false)}<div class="col" style="padding-left:6px">${pqSmall('', 'Data Type: Any')}${pqSmall('firstRow', 'Use First Row as Headers')}${pqSmall('replace', 'Replace Values', false)}</div><span slot="label">Transform</span></pq-group>
<pq-group start style="--w:130px"><div class="col" style="padding-left:7px">${pqSmall('merge', 'Merge Queries')}${pqSmall('append', 'Append Queries')}${pqSmall('combine', 'Combine Files', false, 'off')}</div><span slot="label">Combine</span></pq-group>
<pq-group style="--w:80px">${pqBig('parameters', 76, 'Manage', 'Parameters')}<span slot="label">Parameters</span></pq-group>
<pq-group style="--w:78px">${pqBig('dataSource', 75, 'Data source', 'settings', false)}<span slot="label">Data Sources</span></pq-group>
<pq-group start style="--w:124px"><div class="col" style="padding-left:7px">${pqSmall('newSource', 'New Source')}${pqSmall('recentSource', 'Recent Sources', true, 'off')}</div><span slot="label">New Query</span></pq-group>`);

define('pq-queries', `
<style>${baseStyle}
:host { flex: none; width: 180px; border-right: 1px solid #bdbdbd; padding: 12px 0 0 13px; color: #444; }
header { display: flex; justify-content: space-between; width: 158px; height: 16px; color: #217346; font-size: 10px; line-height: 18px; }
header button { color: #555; line-height: 0; align-self: flex-start; }
li { width: 152px; height: 25px; border-top: 1px solid #a8a8a8; background: #d3f0e0; display: flex; align-items: center; gap: 10px; padding-left: 6px; }
</style>
<header>Queries [1]<button aria-label="Collapse">${icon('left')}</button></header>
<ul><li>${icon('table')}Table1</li></ul>`);

const columns = [
  ['', 'ce', 59], ['whole', 'Discount %', 123], ['decimal', 'Total Sales', 128], ['any', 'Payment Method', 143],
  ['any', 'Salesperson', 128], ['any', 'Warehouse', 118], ['any', 'Order Status', 133], ['whole', 'Delivery Days', 138],
  ['whole', 'Customer Rating', 148], ['any', 'Attribute', 118]
];
const orders = `1099|5|2088.1|Credit Card|Emma Brown|London|Delivered|2
999|0|999|PayPal|Daniel Lee|New York|Delivered|1
650|10|1755|Cash|Aisha Malik|Lahore|Delivered|4
420|8|772.8|Credit Card|Liam Scott|Toronto|Delivered|3
95|5|451.25|Debit Card|Sophia White|Sydney|Delivered|2
110|0|440|JazzCash|Omar Ali|Karachi|Delivered|1
1450|12|1276|Bank Transfer|Lucas Meyer|Berlin|Delivered|5
380|5|722|Credit Card|Emma Brown|Paris|Delivered|3
429|0|1287|Credit Card|Noah Green|Dubai|Delivered|2
285|10|256.5|PayPal|Emily Hall|Manchester|Delivered|4
1599|7|2974.14|Credit Card|Chris Young|Chicago|Processing|5
145|5|826.5|Cash|Sana Ahmed|Islamabad|Delivered|2
180|5|513|Debit Card|Oliver King|Birmingham|Delivered|2
210|0|420|Credit Card|Mia Adams|Seattle|Delivered|3
640|8|1177.6|Bank Transfer|Hamza Iqbal|Multan|Shipped|4
130|10|468|Credit Card|Ella Carter|Vancouver|Delivered|2
850|5|1615|PayPal|Leo Fischer|Munich|Delivered|3
1499|5|1424.05|Credit Card|Umar Hassan|Faisalabad|Processing|5
140|10|630|Debit Card|Harry Evans|Leeds|Delivered|2
699|5|1328.1|Credit Card|Evelyn Hill|Boston|Delivered|3`.split('\n').map((line, i) => [...line.split('|'), ratings[i], 'Order ID']);

define('pq-grid', `
<style>${baseStyle}
:host { overflow: hidden; }
table { table-layout: fixed; border-collapse: separate; border-spacing: 0; width: 100%; font-size: 10px; color: #444; border: 1px solid #a6a6a6; border-width: 1px 0 0 1px; }
th, td { height: 21px; padding: 0 3px; line-height: 18px; white-space: nowrap; overflow: hidden; border: 0 solid #d0d0d0; border-width: 0 1px 1px 0; }
td { background: #fff; text-align: left; }
td.num { text-align: right; font-style: italic; }
th { background: #e6e6e6; border-color: #a6a6a6; font-weight: 400; }
tbody th { font-size: 11px; text-align: center; padding: 0; }
thead th { height: 21px; padding: 0 2px; font-weight: 700; }
thead div { display: flex; align-items: center; height: 20px; gap: 5px; }
thead th:first-child div { gap: 1px; padding-left: 2px; }
thead th:nth-child(2) { padding-left: 0; }
thead button { margin-left: auto; width: 16px; height: 16px; border: 1px solid #a0a0a0; background: #fff; display: flex; align-items: center; justify-content: center; color: #666; flex: none; }
thead th:last-child { background: #9fd5b7; }
td:last-child { background: #d3f0e0; }
</style>
<table>
  <colgroup><col style="width:29px">${columns.map(c => `<col style="width:${c[2]}px">`).join('')}</colgroup>
  <thead><tr><th><div>${icon('table')}${icon('caret')}</div></th>${columns.map(c => `<th scope="col"><div>${c[0] ? icon(c[0]) : ''}${c[1]}<button aria-label="Filter ${c[1]}">${icon('caret')}</button></div></th>`).join('')}</tr></thead>
  <tbody>${orders.map((row, i) => `<tr><th scope="row">${i + 1}</th>${row.map((v, j) => `<td${[0, 1, 2, 7, 8].includes(j) ? ' class="num"' : ''}>${v}</td>`).join('')}</tr>`).join('')}</tbody>
</table>`);

define('pq-preview', `
<style>${baseStyle}
:host { flex: 1; min-width: 0; display: flex; flex-direction: column; padding: 10px 4px 0; }
.formula { display: flex; gap: 4px; height: 28px; margin-bottom: 4px; }
.tools, .text { background: #fff; border: 1px solid #a6a6a6; display: flex; align-items: center; }
.tools { width: 110px; justify-content: space-between; padding: 0 11px 0 12px; color: #c6c6c6; }
.tools i { font: italic 18px "Liberation Serif", serif; color: #555; }
.text { flex: 1; padding-right: 5px; color: #666; }
.text input { flex: 1; border: 0; outline: 0; padding: 0 8px; font: 11px "DejaVu Sans Mono", monospace; color: #333; }
pq-grid { flex: 1; }
.scroll { display: flex; align-items: center; height: 17px; margin-left: 30px; background: #f0f0f0; color: #555; }
.scroll button { width: 44px; display: flex; justify-content: center; }
.scroll div { flex: 1; }
.scroll i { display: block; margin-left: 49%; width: 48%; height: 15px; background: #cdcdcd; }
</style>
<div class="formula">
  <span class="tools"><button aria-label="Cancel">${icon('cross')}</button><button aria-label="Enter">${icon('check')}</button><i>fx</i></span>
  <span class="text"><input aria-label="Formula" value='= Table.UnpivotOtherColumns(#"Changed Type", {"Order Date", "Customer ID", "Customer Name", "Country", "City", "Product ID", "Product Category", "Product'>${icon('down')}</span>
</div>
<pq-grid></pq-grid>
<div class="scroll"><button aria-label="Scroll left">${icon('left')}</button><div><i></i></div><button aria-label="Scroll right">${icon('right')}</button></div>`);

define('pq-settings', `
<style>${baseStyle}
:host { flex: none; display: flex; flex-direction: column; width: 266px; border-left: 1px solid #bdbdbd; padding: 16px 24px 20px 10px; color: #444; }
header { display: flex; justify-content: space-between; align-items: center; padding: 0 2px 0 4px; height: 28px; color: #777; }
h2 { margin: 0; font-size: 18px; font-weight: 300; color: #217346; }
h3 { margin: 0; display: flex; align-items: center; gap: 7px; font-size: 11px; font-weight: 700; color: #217346; height: 20px; }
h2 + button { line-height: 0; }
.body { display: flex; flex-direction: column; padding-left: 13px; }
label { height: 17px; line-height: 22px; margin-bottom: 4px; }
input { height: 22px; border: 1px solid #ababab; padding: 0 5px; color: #111; background: #fff; }
a { color: #31689b; text-decoration: none; line-height: 18px; margin: 7px 0 14px; }
.steps { flex: 1; margin-left: 13px; margin-top: 4px; background: #fff; border: 1px solid #ababab; }
li { display: flex; align-items: center; height: 20px; padding-left: 20px; }
li.on { background: #d3f0e0; padding-left: 5px; gap: 4px; color: #444; }
li button { width: 11px; line-height: 0; }
</style>
<header><h2>Query Settings</h2><button aria-label="Close">${icon('close')}</button></header>
<h3 style="margin-top:13px">${icon('corner')}PROPERTIES</h3>
<div class="body"><label for="name">Name</label><input id="name" value="Table1"><a href="#">All Properties</a></div>
<h3>${icon('corner')}APPLIED STEPS</h3>
<ul class="steps"><li>Source</li><li>Changed Type</li><li class="on"><button aria-label="Delete step">${icon('close')}</button>Unpivoted Columns</li></ul>`);

define('pq-window', `
<style>${baseStyle}
:host { display: flex; flex-direction: column; background: #fff; border: 0 solid #fff; border-width: 0 1px 1px; box-shadow: 0 1px 2px rgba(0,0,0,.35), 0 5px 16px rgba(0,0,0,.4); }
.title { display: flex; align-items: center; height: 31px; padding-left: 8px; color: #111; }
.title > i { width: 1px; height: 12px; background: #aaa; margin: 0 7px; }
.title h1 { margin: 0; font-size: 11px; font-weight: 400; }
.title > xl-icon[name="smile"] { margin: 0 1px 0 2px; }
.title > xl-icon[name="customize"] { margin: 0 1px 0 7px; }
.title > xl-icon[name="caret"] { color: #555; margin-left: 1px; }
.win { display: flex; margin-left: auto; }
.win button { width: 46px; line-height: 0; }
.win button:first-child { color: #bbb; }
.tabs { display: flex; height: 24px; border-bottom: 1px solid #d6d8db; align-items: stretch; }
.tabs button { padding: 0 14px 0 15px; color: #222; }
.tabs .file { width: 56px; padding: 0; background: #1979ca; color: #fff; height: 23px; }
.tabs .on { width: 58px; padding: 0; background: #f5f6f7; border: 1px solid #d6d8db; border-bottom: 0; margin-bottom: -1px; }
.tabs .right { margin-left: auto; display: flex; align-items: center; gap: 12px; padding-right: 4px; color: #999; }
.body { flex: 1; min-height: 0; display: flex; background: #e6e6e6; }
.foot { display: flex; justify-content: space-between; height: 22px; line-height: 21px; padding: 0 5px; background: #f2f1f0; border-top: 1px solid #bdbdbd; color: #444; }
</style>
<div class="title">${icon('excel')}<i></i>${icon('smile')}${icon('caret')}${icon('customize')}<i></i><h1>Table1 - Power Query Editor</h1>
  <span class="win"><button aria-label="Minimize">${icon('minimize')}</button><button aria-label="Maximize">${icon('maximize')}</button><button aria-label="Close">${icon('close')}</button></span>
</div>
<div class="tabs"><button class="file">File</button><button class="on">Home</button><button>Transform</button><button>Add Column</button><button>View</button><span class="right">${icon('up')}${icon('help')}</span></div>
<pq-ribbon></pq-ribbon>
<div class="body"><pq-queries></pq-queries><pq-preview></pq-preview><pq-settings></pq-settings></div>
<div class="foot"><span>21 COLUMNS, 20 ROWS</span><span>PREVIEW DOWNLOADED AT 10:54 PM</span></div>`);
</script>
</body>
</html>
